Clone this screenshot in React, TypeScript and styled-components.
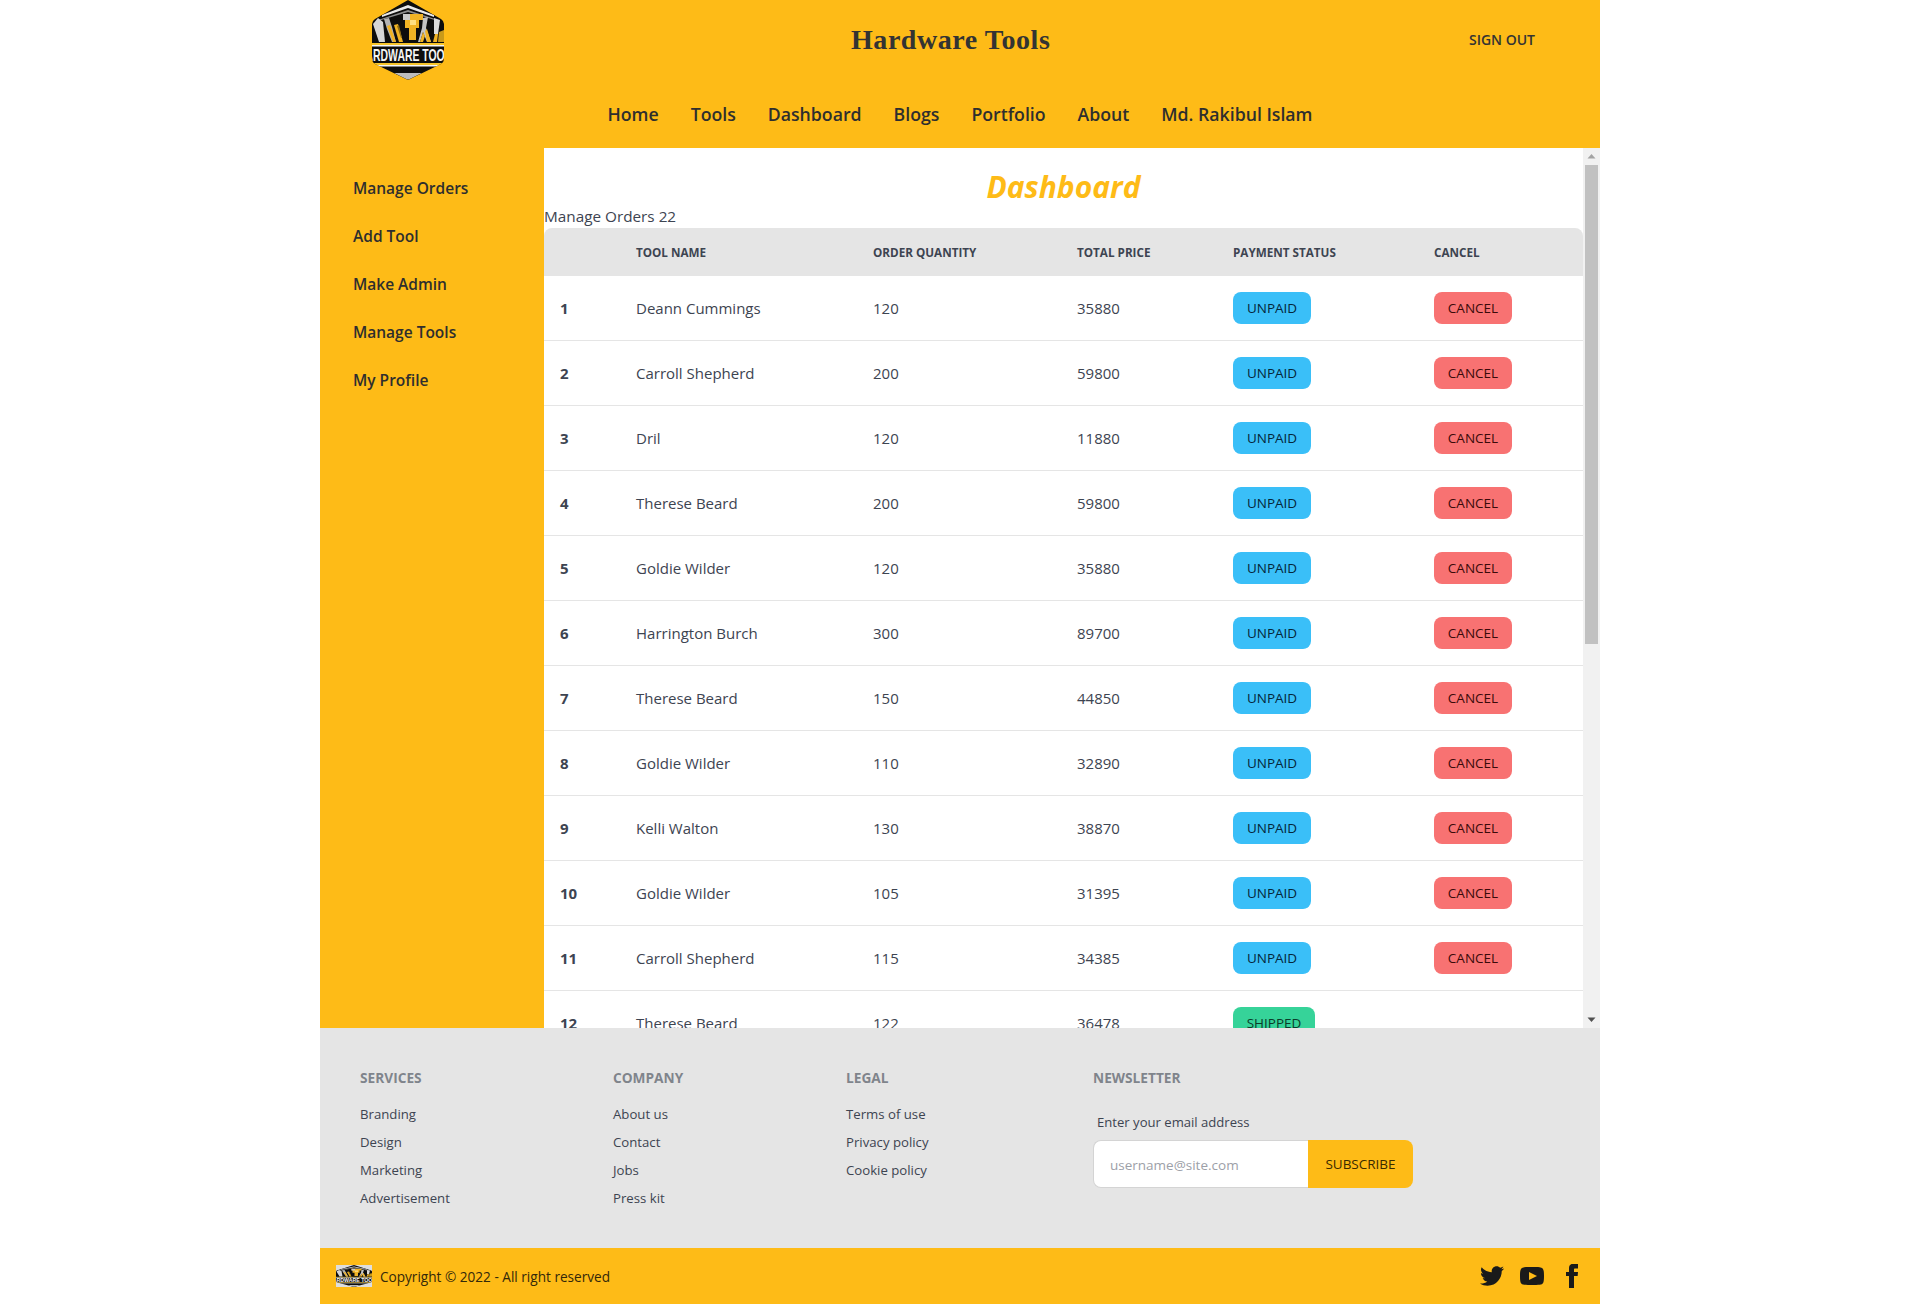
import styled, { createGlobalStyle } from "styled-components";

const YELLOW = "#febb17";
const GREY = "#e5e5e5";
const INK = "#3d4451";

const GlobalStyle = createGlobalStyle`
  body {
    margin: 0;
    background: #fff;
    font-family: "Open Sans", "Noto Sans", sans-serif;
    color: ${INK};
  }
`;

const Page = styled.div`
  width: 1280px;
  margin: 0 auto;
`;

const Header = styled.header`
  background: ${YELLOW};
  height: 148px;
`;

const TopRow = styled.div`
  display: grid;
  grid-template-columns: 479px auto 1fr;
  align-items: center;
  height: 80px;
  padding: 0 65px 0 52px;
`;

const Title = styled.div`
  font-family: "Liberation Serif", serif;
  font-weight: 700;
  font-size: 28px;
  letter-spacing: 0.55px;
  white-space: nowrap;
  color: #333;
`;

const SignOut = styled.a`
  justify-self: end;
  margin-bottom: 2px;
  font-size: 14px;
  font-weight: 600;
  color: #333;
  text-transform: uppercase;
`;

const Nav = styled.nav`
  display: flex;
  justify-content: center;
  gap: 32px;
  padding-top: 21px;
`;

const NavLink = styled.a`
  font-size: 17.7px;
  line-height: 26px;
  font-weight: 600;
  color: #2e2e2e;
`;

const Body = styled.div`
  display: grid;
  grid-template-columns: 224px 1fr 17px;
  height: 880px;
`;

const Sidebar = styled.aside`
  background: ${YELLOW};
  display: flex;
  flex-direction: column;
  gap: 24px;
  padding: 28px 0 0 33px;
`;

const SideLink = styled.a`
  font-size: 15.5px;
  line-height: 24px;
  font-weight: 600;
  color: #2e2e2e;
`;

const Main = styled.main`
  overflow-y: auto;
  background: #fff;
`;

const ScrollTrack = styled.div`
  background: #f1f1f1;
  display: flex;
  flex-direction: column;
  justify-content: space-between;
`;

const ScrollThumb = styled.div`
  height: 479px;
  margin: 0 2px;
  background: #c1c1c1;
`;

const ScrollTop = styled.div`
  display: flex;
  flex-direction: column;
`;

const ScrollArrow = styled.svg`
  width: 17px;
  height: 17px;
  display: block;
`;

const Heading = styled.h2`
  margin: 0;
  padding-top: 21px;
  text-align: center;
  font-size: 30px;
  line-height: 35px;
  font-weight: 700;
  font-style: italic;
  color: ${YELLOW};
`;

const Count = styled.div`
  font-size: 15.3px;
  line-height: 24px;
`;

const Table = styled.table`
  width: 100%;
  table-layout: fixed;
  border-collapse: separate;
  border-spacing: 0;
`;

const Th = styled.th<{ $w: number }>`
  width: ${(p) => p.$w}px;
  box-sizing: border-box;
  background: ${GREY};
  padding: 16px;
  font-size: 11.7px;
  line-height: 16px;
  font-weight: 700;
  text-align: left;
  text-transform: uppercase;
  white-space: nowrap;

  &:first-child {
    border-top-left-radius: 8px;
  }
  &:last-child {
    border-top-right-radius: 8px;
  }
`;

const Td = styled.td`
  padding: 16px;
  font-size: 15px;
  line-height: 24px;
  border-bottom: 1px solid ${GREY};
  white-space: nowrap;
`;

const RowNum = styled(Td)`
  font-weight: 700;
`;

const Badge = styled.button<{ $bg: string; $fg: string; $w: number }>`
  display: block;
  width: ${(p) => p.$w}px;
  height: 32px;
  padding: 0;
  border: 0;
  border-radius: 8px;
  background: ${(p) => p.$bg};
  color: ${(p) => p.$fg};
  font-family: inherit;
  font-size: 13.5px;
  font-weight: 500;
  text-transform: uppercase;
`;

const Footer = styled.footer`
  background: ${GREY};
  height: 220px;
  box-sizing: border-box;
  padding: 40px 40px 0;
  display: grid;
  grid-template-columns: 253px 233px 247px 1fr;
  align-items: start;
`;

const FootCol = styled.div`
  display: flex;
  flex-direction: column;
  align-items: flex-start;
`;

const FootHead = styled.span`
  font-size: 13.7px;
  line-height: 20px;
  font-weight: 700;
  text-transform: uppercase;
  opacity: 0.6;
  margin-bottom: 8px;
`;

const FootLink = styled.a`
  font-size: 13.2px;
  line-height: 20px;
  margin-top: 8px;
  color: ${INK};
`;

const EmailLabel = styled.label`
  font-size: 13.1px;
  line-height: 20px;
  padding: 8px 4px;
  margin-top: 8px;
`;

const Subscribe = styled.div`
  display: flex;
  height: 48px;
`;

const EmailInput = styled.input`
  box-sizing: border-box;
  width: 215px;
  height: 48px;
  padding: 2px 16px 0;
  border: 1px solid #d4d4d4;
  border-right: 0;
  border-radius: 8px 0 0 8px;
  background: #fff;
  font-family: inherit;
  font-size: 13.5px;

  &::placeholder {
    color: #9ca0a8;
  }
`;

const SubscribeButton = styled.button`
  width: 105px;
  padding: 0;
  border: 0;
  border-radius: 0 8px 8px 0;
  background: ${YELLOW};
  color: #3a2a00;
  font-family: inherit;
  font-size: 13.5px;
  font-weight: 500;
  text-transform: uppercase;
`;

const BottomBar = styled.div`
  background: ${YELLOW};
  height: 56px;
  display: flex;
  align-items: center;
  justify-content: space-between;
  padding: 0 16px;
`;

const Copy = styled.div`
  display: flex;
  align-items: center;
  gap: 8px;
  font-size: 13.6px;
  color: #33280a;
`;

const Socials = styled.div`
  display: flex;
  gap: 16px;
`;

const Social = styled.svg`
  width: 24px;
  height: 24px;
  fill: #1a1a1a;
  display: block;
`;

const LogoSvg = styled.svg<{ $w: number; $h: number; $bg: string }>`
  width: ${(p) => p.$w}px;
  height: ${(p) => p.$h}px;
  background: ${(p) => p.$bg};
  display: block;
`;

function Logo({ w, h, bg, id }: { w: number; h: number; bg: string; id: string }) {
  return (
    <LogoSvg $w={w} $h={h} $bg={bg} viewBox="0 0 72 80" preserveAspectRatio="none">
      <defs>
        <clipPath id={id}>
          <path d="M36 0L69 19Q72 21 72 24V59Q72 62 69 64L38 79Q36 80 34 79L3 64Q0 62 0 59V24Q0 21 3 19Z" />
        </clipPath>
      </defs>
      <g clipPath={`url(#${id})`}>
        <rect width="72" height="80" fill="#0d0d0d" />
        {/* arcs over the tools */}
        <path d="M10 15L36 5L62 15L62 17L36 8L10 17Z" fill="#e8e8e8" />
        <path d="M6 20L36 10L66 20L66 21L36 12L6 21Z" fill="#8c8c8c" />
        {/* drill */}
        <path d="M31 14H51V20H47V28H44V40H37V28H33V20H31Z" fill="#f0b324" />
        <rect x="31" y="14" width="7" height="6" fill="#c9c9c9" />
        <rect x="38" y="20" width="6" height="5" fill="#ffe083" />
        {/* left tools */}
        <path d="M1 24L6 18L11 22L13 42H7Z" fill="#d6d6d6" />
        <path d="M12 19L17 18L20 27L24 42H20L15 29Z" fill="#b3b3b3" />
        <path d="M15 26L18 25L24 42H21Z" fill="#f0b324" />
        <path d="M22 25L26 24L31 42H27Z" fill="#f0b324" />
        <path d="M25 26L27 25L30 38L29 38Z" fill="#8c6a10" />
        {/* right tools */}
        <path d="M51 18L56 17L54 28L59 42H55L51 32L48 42H46L50 28Z" fill="#c4c4c4" />
        <path d="M48 42L51 32L53 36L51 42Z" fill="#f0b324" />
        <path d="M55 42L53 31L55 29L59 42Z" fill="#f0b324" />
        <path d="M62 18L68 20L66 34H62Z" fill="#dcdcdc" />
        <path d="M61 42L63 34L66 34L65 42Z" fill="#f0b324" />
        <path d="M67 32L72 30V42H66Z" fill="#c99a1a" />
        {/* name band */}
        <rect y="43" width="72" height="2" fill="#f6c52c" />
        <rect y="45" width="72" height="1.5" fill="#f5f5f5" />
        <text
          x="36"
          y="60.5"
          textAnchor="middle"
          fontFamily="Liberation Sans, sans-serif"
          fontSize="17"
          fontWeight="700"
          fill="#f5f5f5"
          textLength="100"
          lengthAdjust="spacingAndGlyphs"
        >
          HARDWARE TOOLS
        </text>
        <rect y="63" width="72" height="2" fill="#f6c52c" />
        <rect y="65" width="72" height="1.5" fill="#f5f5f5" />
        <path d="M22 73H50L38 79Q36 80 34 79Z" fill="#bdbdbd" />
      </g>
    </LogoSvg>
  );
}

const NAV = ["Home", "Tools", "Dashboard", "Blogs", "Portfolio", "About", "Md. Rakibul Islam"];
const SIDE = ["Manage Orders", "Add Tool", "Make Admin", "Manage Tools", "My Profile"];

const COLUMNS = [
  { label: "", w: 76 },
  { label: "Tool Name", w: 237 },
  { label: "Order Quantity", w: 204 },
  { label: "Total Price", w: 156 },
  { label: "Payment Status", w: 201 },
  { label: "Cancel", w: 165 },
];

const ORDERS: [string, number, number, boolean][] = [
  ["Deann Cummings", 120, 35880, false],
  ["Carroll Shepherd", 200, 59800, false],
  ["Dril", 120, 11880, false],
  ["Therese Beard", 200, 59800, false],
  ["Goldie Wilder", 120, 35880, false],
  ["Harrington Burch", 300, 89700, false],
  ["Therese Beard", 150, 44850, false],
  ["Goldie Wilder", 110, 32890, false],
  ["Kelli Walton", 130, 38870, false],
  ["Goldie Wilder", 105, 31395, false],
  ["Carroll Shepherd", 115, 34385, false],
  ["Therese Beard", 122, 36478, true],
  ["Goldie Wilder", 120, 35880, true],
  ["Kelli Walton", 130, 38870, true],
  ["Dril", 120, 11880, true],
  ["Carroll Shepherd", 200, 59800, true],
  ["Harrington Burch", 300, 89700, true],
  ["Deann Cummings", 120, 35880, true],
  ["Therese Beard", 150, 44850, true],
  ["Goldie Wilder", 110, 32890, true],
  ["Kelli Walton", 130, 38870, true],
  ["Carroll Shepherd", 115, 34385, true],
];

const FOOTER = [
  { head: "Services", links: ["Branding", "Design", "Marketing", "Advertisement"] },
  { head: "Company", links: ["About us", "Contact", "Jobs", "Press kit"] },
  { head: "Legal", links: ["Terms of use", "Privacy policy", "Cookie policy"] },
];

export default function App() {
  return (
    <Page>
      <GlobalStyle />
      <Header>
        <TopRow>
          <Logo w={72} h={80} bg="transparent" id="logo-top" />
          <Title>Hardware Tools</Title>
          <SignOut>Sign out</SignOut>
        </TopRow>
        <Nav>
          {NAV.map((n) => (
            <NavLink key={n}>{n}</NavLink>
          ))}
        </Nav>
      </Header>

      <Body>
        <Sidebar>
          {SIDE.map((s) => (
            <SideLink key={s}>{s}</SideLink>
          ))}
        </Sidebar>
        <Main>
          <Heading>Dashboard</Heading>
          <Count>Manage Orders {ORDERS.length}</Count>
          <Table>
            <thead>
              <tr>
                {COLUMNS.map((c) => (
                  <Th key={c.label} $w={c.w}>
                    {c.label}
                  </Th>
                ))}
              </tr>
            </thead>
            <tbody>
              {ORDERS.map(([name, qty, total, shipped], i) => (
                <tr key={i}>
                  <RowNum>{i + 1}</RowNum>
                  <Td>{name}</Td>
                  <Td>{qty}</Td>
                  <Td>{total}</Td>
                  <Td>
                    {shipped ? (
                      <Badge $bg="#36d399" $fg="#0b3b2a" $w={82}>
                        Shipped
                      </Badge>
                    ) : (
                      <Badge $bg="#3abff8" $fg="#05263a" $w={78}>
                        Unpaid
                      </Badge>
                    )}
                  </Td>
                  <Td>
                    {!shipped && (
                      <Badge $bg="#f87272" $fg="#3a0a0a" $w={78}>
                        Cancel
                      </Badge>
                    )}
                  </Td>
                </tr>
              ))}
            </tbody>
          </Table>
        </Main>
        <ScrollTrack>
          <ScrollTop>
            <ScrollArrow viewBox="0 0 17 17">
              <path d="M8.5 6l4 4.5h-8z" fill="#a3a3a3" />
            </ScrollArrow>
            <ScrollThumb />
          </ScrollTop>
          <ScrollArrow viewBox="0 0 17 17">
            <path d="M4.5 6.5h8l-4 4.5z" fill="#505050" />
          </ScrollArrow>
        </ScrollTrack>
      </Body>

      <Footer>
        {FOOTER.map((col) => (
          <FootCol key={col.head}>
            <FootHead>{col.head}</FootHead>
            {col.links.map((l) => (
              <FootLink key={l}>{l}</FootLink>
            ))}
          </FootCol>
        ))}
        <FootCol>
          <FootHead>Newsletter</FootHead>
          <EmailLabel>Enter your email address</EmailLabel>
          <Subscribe>
            <EmailInput placeholder="username@site.com" />
            <SubscribeButton>Subscribe</SubscribeButton>
          </Subscribe>
        </FootCol>
      </Footer>

      <BottomBar>
        <Copy>
          <Logo w={36} h={22} bg="#dedede" id="logo-small" />
          Copyright © 2022 - All right reserved
        </Copy>
        <Socials>
          <Social viewBox="0 0 24 24">
            <path d="M24 4.557c-.883.392-1.832.656-2.828.775 1.017-.609 1.798-1.574 2.165-2.724-.951.564-2.005.974-3.127 1.195-.897-.957-2.178-1.555-3.594-1.555-3.179 0-5.515 2.966-4.797 6.045-4.091-.205-7.719-2.165-10.148-5.144-1.29 2.213-.669 5.108 1.523 6.574-.806-.026-1.566-.247-2.229-.616-.054 2.281 1.581 4.415 3.949 4.89-.693.188-1.452.232-2.224.084.626 1.956 2.444 3.379 4.6 3.419-2.07 1.623-4.678 2.348-7.29 2.04 2.179 1.397 4.768 2.212 7.548 2.212 9.142 0 14.307-7.721 14.206-14.646.962-.695 1.797-1.613 2.457-2.549z" />
          </Social>
          <Social viewBox="0 0 24 24">
            <path d="M19.615 3.184c-3.604-.246-11.631-.245-15.23 0-3.897.266-4.356 2.62-4.385 8.816.029 6.185.484 8.549 4.385 8.816 3.6.245 11.626.246 15.23 0 3.897-.266 4.356-2.62 4.385-8.816-.029-6.185-.484-8.549-4.385-8.816zm-10.615 12.816v-8l8 3.993-8 4.007z" />
          </Social>
          <Social viewBox="0 0 24 24">
            <path d="M9 8h-3v4h3v12h5v-12h3.642l.358-4h-4v-2.077c0-.955.192-1.333 1.115-1.333h2.885v-5h-3.808c-3.596 0-5.192 1.583-5.192 4.615v3.385z" />
          </Social>
        </Socials>
      </BottomBar>
    </Page>
  );
}
